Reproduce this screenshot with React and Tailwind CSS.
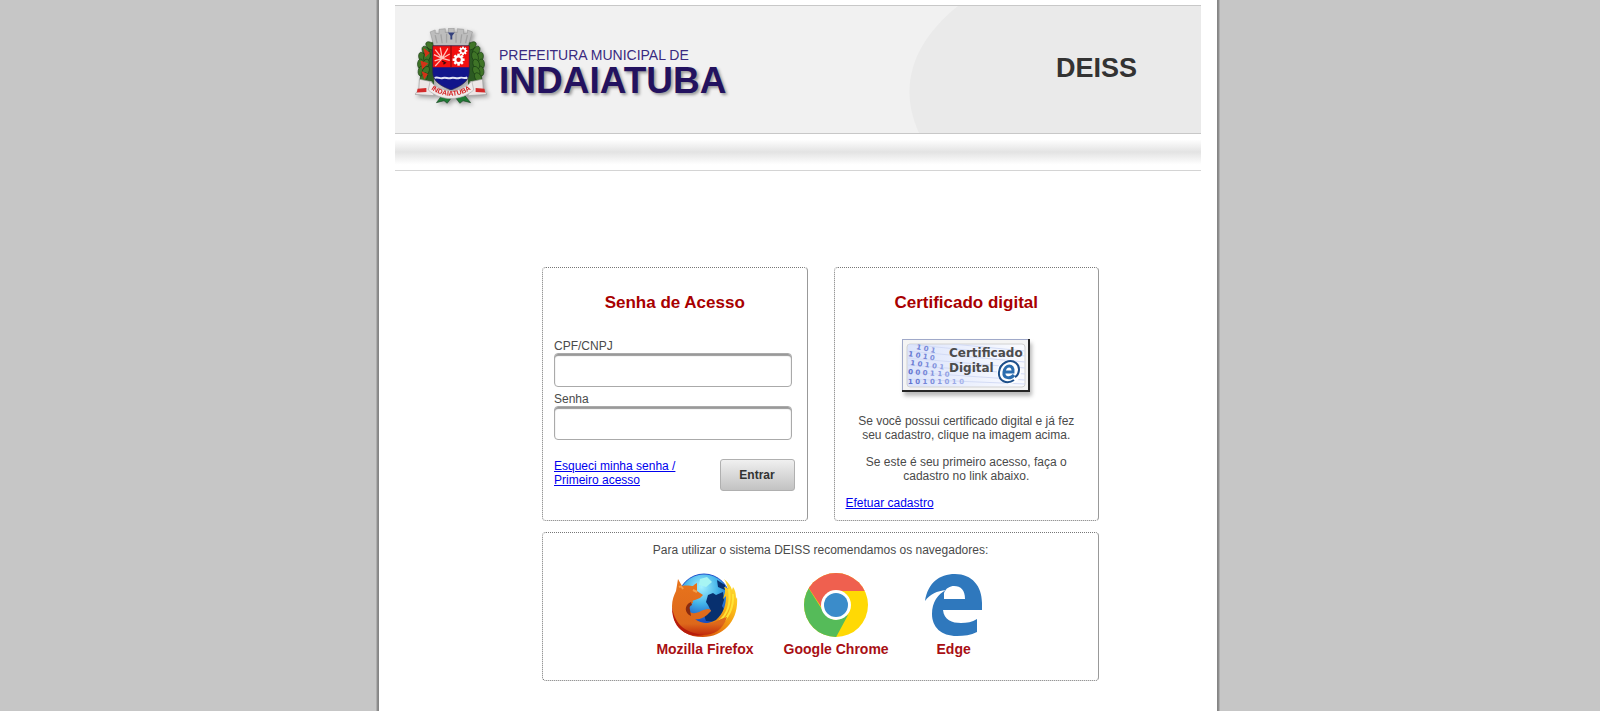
import React, { useState } from 'react';

const leaves = [
  [24, 28, -50], [17, 36, -30], [11, 46, -15], [9, 57, 0], [10, 68, 10], [19, 45, 20], [17, 57, 20], [17, 68, 30], [14, 78, 30],
  [90, 28, 50], [97, 36, 30], [103, 46, 15], [105, 57, 0], [104, 68, -10], [95, 45, -20], [97, 57, -20], [97, 68, -30], [100, 78, -30],
];

const gearTeeth = [0, 45, 90, 135];

const Gear = ({ cx, cy, r }) => (
  <g transform={`translate(${cx} ${cy})`}>
    {gearTeeth.map((angle) => (
      <rect key={angle} x={-r * 0.28} y={-r * 1.35} width={r * 0.56} height={r * 2.7} fill="#fff" transform={`rotate(${angle})`} />
    ))}
    <circle r={r} fill="#fff" />
    <circle r={r * 0.5} fill="#e11414" />
  </g>
);

const Brasao = () => (
  <svg viewBox="0 0 114 120" className="h-[76px] w-[72px] drop-shadow-[2px_2px_2px_rgba(0,0,0,0.35)]" aria-label="Brasão de Indaiatuba">
    <path d="M46 102l-12 16 12-3 5 4 10-13 10 13 5-4 12 3-13-16z" fill="#1f7a35" stroke="#16401c" />
    <path d="M30 20C8 34 2 60 12 88l18 4z" fill="#2c5a22" />
    <path d="M84 20c22 14 28 40 18 68l-18 4z" fill="#2c5a22" />
    {leaves.map(([x, y, angle]) => (
      <ellipse key={`${x}-${y}`} cx={x} cy={y} rx="5" ry="8" fill="#3f7427" stroke="#173b12" transform={`rotate(${angle} ${x} ${y})`} />
    ))}
    <path d="M15 34l7 5-5 5zM10 53l9 3-7 7zM12 70l7 3-4 6z" fill="#d33318" stroke="#d33318" strokeWidth="2" />
    {/* coroa mural */}
    <path d="M24 6l8-3v5l6 1V2l10-1v6h5V0h9v7h5V1l10 1v7l6-1V3l8 3-7 22H30z" fill="#bdbdbd" stroke="#9a9a9a" />
    <path d="M32 11l3 13M41 10l2 14M50 9v14M65 9v14M74 10l-2 14M83 11l-3 13" stroke="#a2a2a2" strokeWidth="2" />
    <path d="M52 7h11l-4 5v6h-3v-6z" fill="#33407c" />
    {/* escudo */}
    <path d="M28 28h58v42c0 15-14 22-29 28-15-6-29-13-29-28z" fill="#11158b" />
    <path d="M28 28h58v34H28z" fill="#f20f0f" />
    <path d="M57 28v34" stroke="#970c0c" strokeWidth="2" />
    <path d="M43 48L32 34M43 48l-3-17M43 48l9-16M43 48l-13-6M43 48l12-7M43 48l-12 4M43 48l12 3M42 49L32 60" stroke="#ffc4bb" strokeWidth="2" />
    <path d="M43 52l5 3-3 2" stroke="#380c0c" strokeWidth="2" fill="none" />
    <Gear cx={69} cy={50} r={7} />
    <Gear cx={76} cy={36} r={5} />
    <path d="M31 79c5-3 8 2 13 0s8 2 13 0 8 2 13 0 9 2 13-1" stroke="#e1e4f4" strokeWidth="3" fill="none" />
    <path d="M28 28h58v42c0 15-14 22-29 28-15-6-29-13-29-28z" fill="none" stroke="#2d2344" />
    {/* faixa */}
    <path d="M7 81l20 4 3 22-30-2 6-8z" fill="#ece6e6" stroke="#999" />
    <path d="M107 81l-20 4-3 22 30-2-6-8z" fill="#ece6e6" stroke="#999" />
    <path d="M4 96l14-1v6l-15 1zM110 96l-14-1v6l15 1z" fill="#d32a2a" />
    <path d="M24 84c18 20 48 20 66 0l3 14c-20 18-52 18-72 0z" fill="#efeaea" stroke="#aaa" />
    <path id="curva" d="M20 92c20 20 54 20 74 0" fill="none" />
    <text fontSize="11" fontWeight="bold" fill="#d21f1f" textAnchor="middle">
      <textPath href="#curva" startOffset="50%">INDAIATUBA</textPath>
    </text>
  </svg>
);

const SeloCertificado = () => (
  <svg viewBox="0 0 128 53" className="h-[53px] w-32" aria-hidden="true">
    <defs>
      <clipPath id="selo-area"><rect x="5" y="5" width="118" height="43" rx="3" /></clipPath>
      <linearGradient id="selo-fundo">
        <stop offset="0" stopColor="#dce4fb" />
        <stop offset="1" stopColor="#fafbff" />
      </linearGradient>
      <linearGradient id="selo-bits" gradientUnits="userSpaceOnUse" x1="5" y1="0" x2="80" y2="0">
        <stop offset="0" stopColor="#5a6dce" />
        <stop offset="1" stopColor="#c3cdf5" />
      </linearGradient>
    </defs>
    <rect width="128" height="53" fill="#f4f4f4" />
    <path d="M0 0h128M0 0v53" stroke="#a0a9c9" strokeWidth="2" />
    <path d="M127 0v52H0" fill="none" stroke="#252525" strokeWidth="2" />
    <rect x="5" y="5" width="118" height="43" rx="3" fill="url(#selo-fundo)" stroke="#d2d2d2" />
    <g clipPath="url(#selo-area)">
      <path d="M5 5l118 12M5 12l118 11M5 19l118 10M5 26l118 9M5 33l118 8M5 40l118 5M50 5l73 7" stroke="#d3dbf5" strokeWidth="1" />
      <g fill="url(#selo-bits)" fontFamily="DejaVu Sans" fontWeight="bold" fontSize="7">
        <text x="14" y="10" transform="rotate(12 14 10)">1 0 1</text>
        <text x="6" y="17" transform="rotate(10 6 17)">1 0 1 0</text>
        <text x="8" y="26" transform="rotate(8 8 26)">1 0 1 0 1</text>
        <text x="6" y="35" transform="rotate(4 6 35)">0 0 0 1 1 0</text>
        <text x="6" y="45">1 0 1 0 1 0 1 0</text>
      </g>
    </g>
    <g fill="#4c4c4c" fontFamily="DejaVu Sans" fontWeight="bold" fontSize="12">
      <text x="47" y="18">Certificado</text>
      <text x="47" y="33">Digital</text>
    </g>
    <circle cx="107" cy="33" r="12" fill="#fff" />
    <path d="M102 33h9c1-8-8-8-9 0-1 7 7 7 10 3" fill="none" stroke="#2b6dae" strokeWidth="3" />
    <path d="M112 41c-7 5-16 1-15-8s11-14 17-9c5 4 3 12-1 14" fill="none" stroke="#1d4f8a" strokeWidth="2" />
  </svg>
);

const FirefoxLogo = () => (
  <svg viewBox="0 0 66 64" className="h-16 w-[66px]" aria-hidden="true">
    <defs>
      <radialGradient id="ff-globo" cx="45%" cy="25%" r="65%">
        <stop offset="0" stopColor="#a5f2ff" />
        <stop offset="0.5" stopColor="#43b3e9" />
        <stop offset="1" stopColor="#1a4fc0" />
      </radialGradient>
      <linearGradient id="ff-corpo" x1="0.5" y1="0" x2="0.5" y2="1">
        <stop offset="0" stopColor="#e8741c" />
        <stop offset="0.8" stopColor="#dd681b" />
        <stop offset="1" stopColor="#c22c0c" />
      </linearGradient>
      <linearGradient id="ff-cauda" x1="0" y1="1" x2="1" y2="0">
        <stop offset="0" stopColor="#b91c08" />
        <stop offset="0.4" stopColor="#e8780f" />
        <stop offset="0.7" stopColor="#fbb917" />
        <stop offset="1" stopColor="#ffe53a" />
      </linearGradient>
    </defs>
    <circle cx="32" cy="27" r="26" fill="url(#ff-globo)" stroke="#1f52cc" />
    <path d="M36 22l5-2 3 2 7-3 1 8-2 6 3 5-8 11-11-1-2-6 7-4-3-6-2-3zM45 7l8 5v5l-7-3z" fill="#08306f" />
    <path d="M28 6l7-2 5 5-6 5-7-2z" fill="#a7f5f3" />
    <path d="M52 6c4 3 7 7 8 11l1-3c3 4 3 9 3 12l1-2C67 47 52 64 31 64 16 64 7 58 2 46c18 6 34 6 42 1 8-7 10-16 10-24l-3 3c2-6 3-9 1-12 2 0 3 1 4 2-1-4-2-7-4-10z" fill="url(#ff-cauda)" />
    <path d="M57 16c2 14-1 25-10 32M61 21c1 14-5 25-16 33" fill="none" stroke="#ffe436" strokeWidth="2" />
    <path d="M6 6l4 7c5-1 9 0 11 0 1-1 2-2 4-3v8l6 4-3 3-5 2c-2 0-3 1-2 3-5 1-6 6-3 9 6 4 12-3 18-3 2 0 3 1 3 2l-4 4c-4 3-8 5-12 4 6 5 16 6 26 0l6-2C51 57 42 62 31 62 12 62 0 49 0 33c0-6 2-11 4-15z" fill="url(#ff-corpo)" />
    <path d="M0 34c3 19 15 26 32 28-13 3-32-3-32-28z" fill="#b71c0b" />
    <path d="M19 29c-7 3-7 11 0 14l-1-6c-1-3 0-4 2-5z" fill="#8a2b10" />
    <path d="M7 14c2-1 3 0 4 2M21 17l4 2" stroke="#f6a04a" strokeWidth="2" fill="none" />
  </svg>
);

const ChromeLogo = () => (
  <svg viewBox="0 0 64 64" className="size-16" aria-hidden="true">
    <clipPath id="chrome-disco"><circle cx="32" cy="32" r="32" /></clipPath>
    <g clipPath="url(#chrome-disco)">
      <path d="M0 0h64v64H0z" fill="#ffd904" />
      <path d="M0 8V0h64v18H32L20 38z" fill="#ef604f" />
      <path d="M0 8l19 30 11 9 14-5-14 26H0z" fill="#55bb59" />
    </g>
    <circle cx="32" cy="32" r="15" fill="#fff" />
    <circle cx="32" cy="32" r="12" fill="#3b8cca" />
  </svg>
);

const EdgeLogo = () => (
  <svg viewBox="0 0 58 64" className="h-16 w-[58px]" aria-hidden="true">
    <path d="M0 28C3 10 14 1 30 1c17 0 27 12 27 29v7H18c1 10 9 13 18 13 6 0 11-1 16-4v13c-6 3-13 4-20 4C16 63 7 54 7 41c0-12 6-20 14-24-9 1-16 4-21 11zM19 26h21c0-9-4-13-11-13-4 0-8 2-10 7z" fill="#2f78bd" />
  </svg>
);

const navegadores = [
  { nome: 'Mozilla Firefox', Logo: FirefoxLogo },
  { nome: 'Google Chrome', Logo: ChromeLogo },
  { nome: 'Edge', Logo: EdgeLogo },
];

const cardClass = 'rounded-[4px] border border-dotted border-[#777] border-r-[#999] [border-right-style:solid]';
const titleClass = 'text-center text-[17px] leading-5 font-bold text-[#a80000]';
const inputClass = 'block h-[34px] w-full rounded-[4px] border border-[#aaa] bg-white px-2 text-sm shadow-[inset_0_2px_1px_#999] outline-none';
const linkClass = 'text-[#0000ee] underline';

const Header = () => (
  <header>
    <div className="relative flex h-[129px] items-start justify-between border-y border-[#c8c8c8] bg-[#f1f1f1] pt-[22px] pr-16 pl-5">
      <svg viewBox="0 0 292 127" className="absolute top-0 right-0 h-[127px] w-[292px]" aria-hidden="true">
        <path d="M49 0C3 37-11 81 10 127h282V0z" fill="#eaeaea" />
      </svg>
      <div className="relative flex items-start gap-3">
        <Brasao />
        <div className="pt-[19px]">
          <p className="text-sm leading-4 text-[#3a2a80]">PREFEITURA MUNICIPAL DE</p>
          <p className="text-[37px] leading-9 font-bold text-[#23125f] [text-shadow:2px_2px_3px_#999]">INDAIATUBA</p>
        </div>
      </div>
      <h1 className="relative pt-6 text-[27px] leading-8 font-bold text-[#333]">DEISS</h1>
    </div>
    <div className="h-[37px] border-b border-[#d4d4d4] bg-linear-to-b from-white from-15% via-[#e3e3e3] to-white to-85%"></div>
  </header>
);

const LoginCard = () => {
  const [documento, setDocumento] = useState('');
  const [senha, setSenha] = useState('');

  return (
    <form className={`${cardClass} px-[11px] pt-[25px]`} onSubmit={(e) => e.preventDefault()}>
      <h2 className={titleClass}>Senha de Acesso</h2>
      <div className="mt-[26px] mr-1">
        <label htmlFor="documento" className="block">CPF/CNPJ</label>
        <input id="documento" type="text" className={inputClass} value={documento} onChange={(e) => setDocumento(e.target.value)} />
      </div>
      <div className="mt-[5px] mr-1">
        <label htmlFor="senha" className="block">Senha</label>
        <input id="senha" type="password" className={inputClass} value={senha} onChange={(e) => setSenha(e.target.value)} />
      </div>
      <div className="mt-[19px] mr-px flex items-start justify-between">
        <a href="#senha" className={linkClass}>
          Esqueci minha senha /<br />Primeiro acesso
        </a>
        <button type="submit" className="h-8 w-[75px] rounded-[3px] border border-[#b0b0b0] bg-linear-to-b from-[#f0f0f0] to-[#c2c2c2] font-bold text-[#333]">
          Entrar
        </button>
      </div>
    </form>
  );
};

const CertificadoCard = () => (
  <section className={`${cardClass} px-[11px] pt-[25px]`}>
    <h2 className={titleClass}>Certificado digital</h2>
    <button type="button" aria-label="Certificado Digital" className="mx-auto mt-[26px] block shadow-[2px_4px_4px_#bbb]">
      <SeloCertificado />
    </button>
    <p className="mt-[22px] text-center">
      Se você possui certificado digital e já fez<br />seu cadastro, clique na imagem acima.
    </p>
    <p className="mt-[13px] text-center">
      Se este é seu primeiro acesso, faça o<br />cadastro no link abaixo.
    </p>
    <a href="#cadastro" className={`${linkClass} mt-[13px] mb-[10px] inline-block`}>Efetuar cadastro</a>
  </section>
);

const App = () => {
  return (
    <div className="flex min-h-screen justify-center bg-[#c6c6c6] pr-1 font-['Liberation_Sans',Arial,sans-serif] text-xs leading-[14px] text-[#4a4a4a]">
      <div className="w-full max-w-[838px] bg-white px-4 pt-[5px] pb-7 shadow-[0_0_0_1px_#858585,0_0_0_2px_#8d8d8d,0_0_0_3px_#adadad]">
        <Header />
        <main className="mt-24 mr-[102px] ml-[147px]">
          <div className="grid grid-cols-2 gap-[26px]">
            <LoginCard />
            <CertificadoCard />
          </div>
          <section className={`${cardClass} mt-[11px] pt-[10px] pb-[23px] text-center`}>
            <p>Para utilizar o sistema DEISS recomendamos os navegadores:</p>
            <ul className="mt-4 flex justify-center gap-[30px] pl-1">
              {navegadores.map(({ nome, Logo }) => (
                <li key={nome} className="flex min-w-[70px] flex-col items-center gap-1">
                  <Logo />
                  <span className="text-sm leading-4 font-bold text-[#a80f14]">{nome}</span>
                </li>
              ))}
            </ul>
          </section>
        </main>
      </div>
    </div>
  );
};

export default App;
